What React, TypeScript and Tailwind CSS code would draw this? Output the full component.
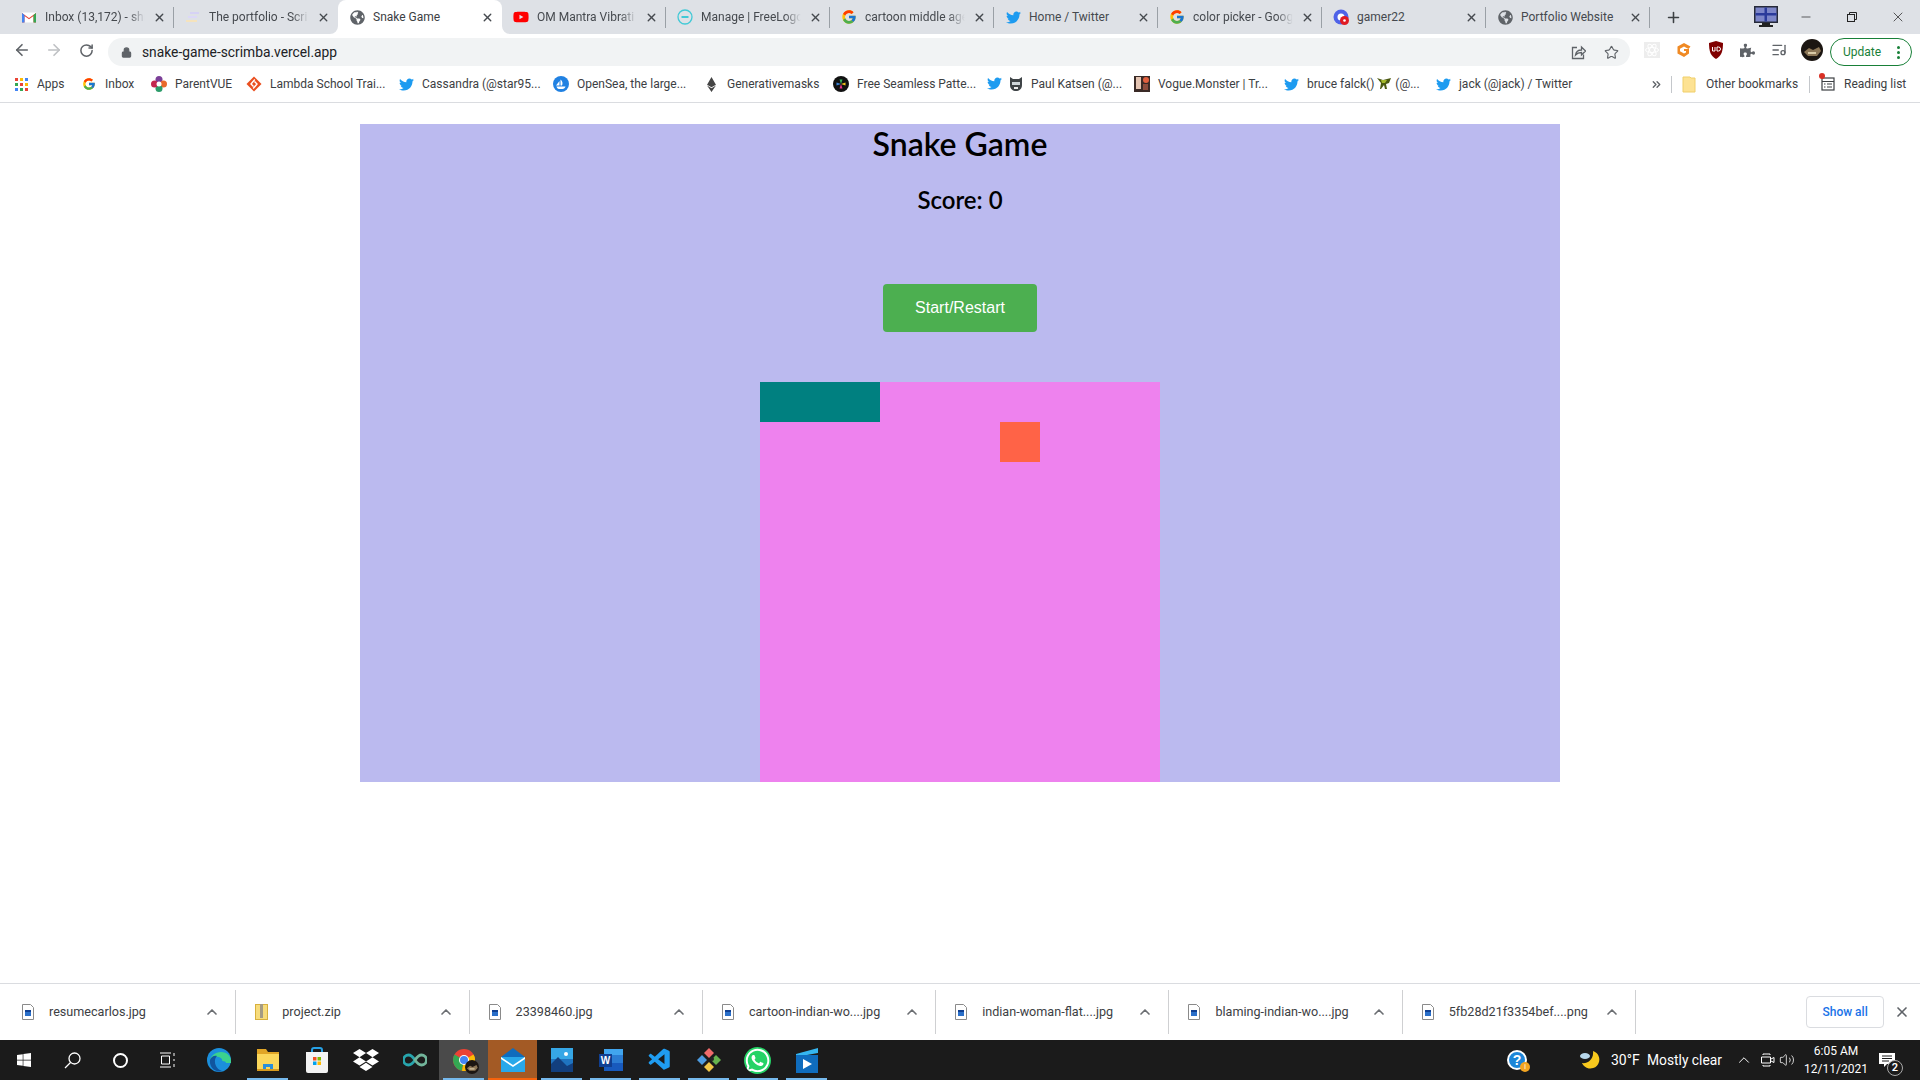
import type { ReactNode } from "react";
import { ArrowLeft, ArrowRight, RotateCw, Lock, Star, X, Plus, Minus, ChevronUp, ChevronsRight, ListMusic, Volume2 } from "lucide-react";
import { FaTwitter, FaDropbox, FaWhatsapp, FaEthereum, FaGlobeAmericas, FaPuzzlePiece, FaWindows, FaYoutube } from "react-icons/fa";
import { FcGoogle } from "react-icons/fc";
import { VscVscode } from "react-icons/vsc";

const ui = "font-['Roboto',sans-serif]";

function Gmail() {
  return (
    <svg width="16" height="16" viewBox="0 0 16 16">
      <path d="M1 3.5h14v10H1z" fill="#fff" />
      <path d="M1 13.5V4l7 5 7-5v9.500h-2.500V7L8 10.300 3.500 7v6.500z" fill="#ea4335" />
      <path d="M1 13.500V4l2.500 2v7.500z" fill="#4285f4" />
      <path d="M15 13.500V4l-2.500 2v7.500z" fill="#34a853" />
    </svg>
  );
}

function Portfolio() {
  return (
    <svg width="16" height="16" viewBox="0 0 16 16">
      <rect x="5" y="3" width="9" height="2" fill="#d6d2f5" />
      <rect x="3" y="7" width="9" height="2" fill="#dcd8f8" />
      <rect x="1" y="11" width="11" height="2" fill="#f5e3bd" />
    </svg>
  );
}

function Flo() {
  return (
    <svg width="16" height="16" viewBox="0 0 16 16">
      <circle cx="8" cy="8" r="7" fill="none" stroke="#42c9d6" strokeWidth="1.300" />
      <rect x="4.500" y="7" width="7" height="2" fill="#42c9d6" />
    </svg>
  );
}

function Gamer() {
  return (
    <svg width="16" height="16" viewBox="0 0 16 16">
      <circle cx="8" cy="8" r="7.500" fill="#4f63e8" />
      <circle cx="8" cy="8" r="3.500" fill="#fff" />
      <circle cx="11.500" cy="11.500" r="4.500" fill="#e01b24" />
      <circle cx="11.500" cy="11.500" r="1.300" fill="#fff" />
    </svg>
  );
}

function Globe() {
  return <FaGlobeAmericas size={15} color="#5f6368" />;
}

function Lambda() {
  return (
    <svg width="16" height="16" viewBox="0 0 16 16">
      <path d="M8 .5 15.500 8 8 15.500.5 8z" fill="#ea4f1f" />
      <path d="M8.800 3.500 5 8l2.500 2.500M7.200 12.500 11 8 8.500 5.500" fill="none" stroke="#fff" strokeWidth="1.400" />
    </svg>
  );
}

function ParentVue() {
  return (
    <svg width="16" height="16" viewBox="0 0 16 16">
      <circle cx="8" cy="3.500" r="3.500" fill="#7b3f98" />
      <circle cx="12.500" cy="8" r="3.500" fill="#e9692c" />
      <circle cx="8" cy="12.500" r="3.500" fill="#2c9c6a" />
      <circle cx="3.500" cy="8" r="3.500" fill="#c3274f" />
      <circle cx="8" cy="8" r="2.500" fill="#fff" />
    </svg>
  );
}

function OpenSea() {
  return (
    <svg width="16" height="16" viewBox="0 0 16 16">
      <circle cx="8" cy="8" r="8" fill="#2081e2" />
      <path d="M3 9.500h3.500V5zM7.500 3.500c2 1.500 2.500 4 1.500 6H7.500zM3.500 10.500h9c-.5 1.500-1.500 2.500-3 2.500H6c-1.300 0-2-1-2.500-2.500z" fill="#fff" />
    </svg>
  );
}

function Seamless() {
  return (
    <svg width="16" height="16" viewBox="0 0 16 16">
      <circle cx="8" cy="8" r="8" fill="#111" />
      <path d="M8 8 6.500 3.500h3z" fill="#38b35c" />
      <path d="M8 8l4.500-1.500v3z" fill="#f2c21b" />
      <path d="M8 8l1.500 4.500h-3z" fill="#e9338a" />
      <path d="M8 8 3.500 9.500v-3z" fill="#3b82d6" />
    </svg>
  );
}

function Vogue() {
  return (
    <svg width="16" height="16" viewBox="0 0 16 16">
      <rect width="16" height="16" fill="#3a2a26" />
      <rect x="2" y="1" width="5" height="12" fill="#e4c4b2" />
      <circle cx="12" cy="4" r="3" fill="#e2603f" />
      <rect x="9" y="8" width="5" height="6" fill="#8d4c3d" />
    </svg>
  );
}

function PaulIcon() {
  return (
    <svg width="14" height="16" viewBox="0 0 14 16">
      <path d="M1 1l3 2h6l3-2v8c0 4-3 6-6 6S1 13 1 9z" fill="#3f4447" />
      <rect x="3" y="6" width="8" height="3" fill="#cfd6da" />
      <rect x="5" y="11" width="4" height="2" fill="#eee" />
    </svg>
  );
}

function Bug() {
  return (
    <svg width="15" height="13" viewBox="0 0 15 13" className="mx-[3px] inline-block align-[-2px]">
      <path d="M0 1l6 2 8-2-2 5-3 1 1 5H8L7 8 4 12H3l1-6z" fill="#4c5a12" />
      <path d="M4 3h6l-2 3H5z" fill="#a5b92b" />
    </svg>
  );
}

function Folder() {
  return (
    <svg width="14" height="17" viewBox="0 0 14 17">
      <path d="M1 1h7l1 1h4v14H1z" fill="#fde293" stroke="#f0cf6b" />
    </svg>
  );
}

function ReadingList() {
  return (
    <span className="relative flex">
      <svg width="16" height="16" viewBox="0 0 16 16" fill="none" stroke="#3c4043" strokeWidth="1.200">
        <rect x="2" y="2" width="12" height="12" />
        <path d="M2 5.500h12M7 8h5M7 11h5M4 8h1.500M4 11h1.500" />
      </svg>
      <span className="absolute -top-[3px] -left-[1px] size-[6px] rounded-full bg-[#d93025]" />
    </span>
  );
}

function Apps() {
  const colors = ["#ea4335", "#fbbc05", "#4285f4", "#34a853", "#ea4335", "#fbbc05", "#4285f4", "#34a853", "#ea4335"];
  return (
    <span className="grid grid-cols-3 gap-[2px]">
      {colors.map((c, i) => (
        <span key={i} className="size-[3px]" style={{ backgroundColor: c }} />
      ))}
    </span>
  );
}

function Monitor() {
  return (
    <svg width="24" height="22" viewBox="0 0 24 22">
      <rect x="0" y="0" width="24" height="17" fill="#262a3a" />
      <rect x="1.500" y="1.500" width="21" height="14" fill="#7d86c9" />
      <rect x="1.500" y="7" width="21" height="2.500" fill="#2b3a9b" />
      <rect x="10.500" y="1.500" width="2.500" height="14" fill="#2b3a9b" />
      <rect x="8" y="17" width="8" height="2" fill="#222" />
      <rect x="5" y="19" width="14" height="2" fill="#222" />
    </svg>
  );
}

function Restore() {
  return (
    <svg width="10" height="10" viewBox="0 0 10 10" fill="none" stroke="#222" strokeWidth="1">
      <rect x=".5" y="2.500" width="7" height="7" />
      <path d="M2.500 2.500v-2h7v7h-2" />
    </svg>
  );
}

function ShareBox() {
  return (
    <svg width="15" height="15" viewBox="0 0 15 15" fill="none" stroke="#5f6368" strokeWidth="1.300">
      <path d="M6 2.500H1.500v11h11V9.500" />
      <path d="M4.500 10c.5-3.500 3-5 6-5V2l4 4-4 4V7.500c-2.500 0-4.500.8-6 2.500z" />
    </svg>
  );
}

function ReactExt() {
  return (
    <span className="flex size-[16px] items-center justify-center bg-[#ededed]">
      <svg width="14" height="14" viewBox="0 0 14 14" fill="none" stroke="#fff" strokeWidth="1">
        <ellipse cx="7" cy="7" rx="6.500" ry="2.500" />
        <ellipse cx="7" cy="7" rx="6.500" ry="2.500" transform="rotate(60 7 7)" />
        <ellipse cx="7" cy="7" rx="6.500" ry="2.500" transform="rotate(120 7 7)" />
      </svg>
    </span>
  );
}

function GExt() {
  return (
    <svg width="16" height="16" viewBox="0 0 16 16">
      <path d="M8 1 14.500 4.500 12.500 7 8 4.500 4 6.800v2.400L8 11.500l2-1.100V9H8V7h5v4.500L8 15 1.500 11.500v-7z" fill="#f08a24" />
    </svg>
  );
}

function UBlock() {
  return (
    <svg width="16" height="18" viewBox="0 0 16 18">
      <path d="M8 0 15 2c0 8-1.500 13-7 16C2.500 15 1 10 1 2z" fill="#800000" />
      <path d="M4.500 6v4h2.500V6M9 6v4h1.500a2 2 0 0 0 0-4z" fill="none" stroke="#fff" strokeWidth="1" />
    </svg>
  );
}

function Avatar({ size }: { size: number }) {
  return (
    <svg width={size} height={size} viewBox="0 0 22 22">
      <circle cx="11" cy="11" r="11" fill="#1c1612" />
      <path d="M3 13l5-4 4 2 6-3 2 4-4 5H7z" fill="#8c7656" />
      <path d="M7 13h8v2H7z" fill="#d8c9a6" />
    </svg>
  );
}

function ChromeIcon() {
  return (
    <span className="relative flex">
      <svg width="22" height="22" viewBox="0 0 22 22">
        <circle cx="11" cy="11" r="11" fill="#ea4335" />
        <path d="M11 11 1.500 5.500A11 11 0 0 0 9 21.800z" fill="#34a853" />
        <path d="M11 11l-2 10.800A11 11 0 0 0 20.500 5.500z" fill="#fbbc05" />
        <circle cx="11" cy="11" r="5" fill="#fff" />
        <circle cx="11" cy="11" r="4" fill="#4285f4" />
      </svg>
      <span className="absolute -right-[4px] -bottom-[3px] flex">
        <Avatar size={14} />
      </span>
    </span>
  );
}

function Edge() {
  return (
    <svg width="24" height="24" viewBox="0 0 24 24">
      <circle cx="12" cy="12" r="12" fill="#1b8fdc" />
      <path d="M24 13c0-5-4-9-10-9C8 4 4 8 3 12c2-3 6-4 9-3 3 1 4 3 3 6h9z" fill="#3bd28e" />
      <path d="M3 12c1-3 4-5 7-4-2 2-3 6-1 10 1 2 3 4 6 5-7 2-13-4-12-11z" fill="#10559f" />
      <ellipse cx="15" cy="15" rx="4" ry="2" fill="#1b8fdc" />
    </svg>
  );
}

function Explorer() {
  return (
    <svg width="24" height="22" viewBox="0 0 24 22">
      <path d="M1 0h9l2 3h11v4H1z" fill="#e0a526" />
      <rect x="1" y="5" width="22" height="16" fill="#fbd75b" />
      <path d="M7 21v-6h10v6h-3v-3h-4v3z" fill="#2a8fd9" />
      <rect x="1" y="20" width="22" height="2" fill="#d69a1f" />
    </svg>
  );
}

function Store() {
  return (
    <svg width="24" height="26" viewBox="0 0 24 26">
      <path d="M7 6V3a2 2 0 0 1 2-2h6a2 2 0 0 1 2 2v3" fill="none" stroke="#27a1e6" strokeWidth="2" />
      <path d="M1 5h22v19a2 2 0 0 1-2 2H3a2 2 0 0 1-2-2z" fill="#f3f3f3" />
      <rect x="8" y="10" width="3.500" height="3.500" fill="#f25022" />
      <rect x="12.500" y="10" width="3.500" height="3.500" fill="#7fba00" />
      <rect x="8" y="14.500" width="3.500" height="3.500" fill="#00a4ef" />
      <rect x="12.500" y="14.500" width="3.500" height="3.500" fill="#ffb900" />
    </svg>
  );
}

function Infinity8() {
  return (
    <svg width="24" height="14" viewBox="0 0 24 14" fill="none" strokeWidth="2.800">
      <path d="M12 7c-2-3-4-5-6.500-5a5 5 0 0 0 0 10c2.500 0 4.500-2 6.500-5z" stroke="#27a5ad" />
      <path d="M12 7c2 3 4 5 6.500 5a5 5 0 0 0 0-10C16 2 14 4 12 7z" stroke="#72b59b" />
    </svg>
  );
}

function MailIcon() {
  return (
    <svg width="24" height="24" viewBox="0 0 24 24">
      <path d="M12 0 24 9v15H0V9z" fill="#0f6cbd" />
      <rect x="0" y="9" width="24" height="15" fill="#28a8ea" />
      <path d="M0 9l12 8 12-8v2l-12 8L0 11z" fill="#fff" />
    </svg>
  );
}

function Photos() {
  return (
    <svg width="22" height="24" viewBox="0 0 22 24">
      <rect width="22" height="24" fill="#1f74c0" />
      <rect width="22" height="11" fill="#36a7e6" />
      <circle cx="15" cy="6" r="2" fill="#fff" />
      <path d="M0 16l7-7 9 9 6-3v9H0z" fill="#123f7e" />
    </svg>
  );
}

function Word() {
  return (
    <svg width="24" height="24" viewBox="0 0 24 24">
      <rect x="5" y="1" width="19" height="22" fill="#2b7cd3" />
      <rect x="5" y="1" width="19" height="6" fill="#41a5ee" />
      <rect x="5" y="15" width="19" height="8" fill="#185abd" />
      <rect x="0" y="6" width="13" height="13" fill="#103f91" />
      <text x="6.500" y="16" textAnchor="middle" fontSize="10" fontWeight="700" fill="#fff" fontFamily="Liberation Sans, sans-serif">W</text>
    </svg>
  );
}

function GitKraken() {
  return (
    <svg width="24" height="24" viewBox="0 0 24 24">
      <path d="M12 0l5 5-5 5-5-5z" fill="#ef6b6b" />
      <path d="M19 7l5 5-5 5-5-5z" fill="#66b34e" />
      <path d="M12 14l5 5-5 5-5-5z" fill="#f0c648" />
      <path d="M5 7l5 5-5 5-5-5z" fill="#4d9be0" />
      <circle cx="15" cy="11" r="2" fill="#222" />
    </svg>
  );
}

function VideoIcon() {
  return (
    <svg width="24" height="26" viewBox="0 0 24 26">
      <path d="M1 7 23 1v5L1 10z" fill="#35b6f0" />
      <rect x="1" y="8" width="22" height="18" fill="#0f6cbd" />
      <path d="M8 12l9 5-9 5z" fill="#fff" />
    </svg>
  );
}

function FileIcon({ zip }: { zip?: boolean }) {
  if (zip) {
    return (
      <svg width="13" height="16" viewBox="0 0 13 16">
        <rect x=".5" y=".5" width="12" height="15" fill="#f7dc7c" stroke="#d8b03c" />
        <rect x="5" y="0" width="3" height="14" fill="#a49b84" />
      </svg>
    );
  }
  return (
    <svg width="12" height="16" viewBox="0 0 12 16">
      <path d="M.5.5h8l3 3v12H.5z" fill="#fff" stroke="#8a8a8a" />
      <rect x="3" y="6" width="6" height="6" fill="#2a6fc9" />
      <rect x="3" y="6" width="6" height="2" fill="#0f3f91" />
    </svg>
  );
}

function HelpIcon() {
  return (
    <span className="relative flex">
      <span className="flex size-[20px] items-center justify-center rounded-full border-2 border-white bg-[#1d86d8] font-['Liberation_Sans',sans-serif] text-[14px] font-bold text-white">?</span>
      <span className="absolute -right-[3px] -bottom-[2px] flex size-[10px] items-center justify-center rounded-full bg-[#f3a522] text-[7px] text-white">i</span>
    </span>
  );
}

function Moon() {
  return (
    <svg width="20" height="18" viewBox="0 0 20 18">
      <path d="M13 0a9 9 0 1 1-11 12c5 1 12-3 11-12z" fill="#f8c91e" />
      <ellipse cx="5" cy="5" rx="5" ry="3" fill="#b6d6ea" />
    </svg>
  );
}

function MeetIcon() {
  return (
    <svg width="14" height="16" viewBox="0 0 14 16" fill="none" stroke="#fff" strokeWidth="1">
      <path d="M9 3V2H2v1M9 13v1H2v-1M.5 5v6h9V5z" />
      <path d="M10 7l3-1.500v5L10 9" />
    </svg>
  );
}

function Notice() {
  return (
    <span className="relative flex">
      <svg width="16" height="14" viewBox="0 0 16 14">
        <path d="M0 0h16v11H8l-3 3v-3H0z" fill="#fff" />
        <path d="M3 3h10M3 5.500h10M3 8h7" stroke="#1b1b1b" />
      </svg>
      <span className="absolute -right-[8px] -bottom-[9px] flex size-[16px] items-center justify-center rounded-full border border-[#aaa] bg-[#1b1b1b] text-[11px] font-semibold text-white">2</span>
    </span>
  );
}

const bird = <FaTwitter size={15} color="#1d9bf0" />;

const tabs: { icon: ReactNode; title: string; fade?: boolean; active?: boolean; line?: boolean }[] = [
  { icon: <Gmail />, title: "Inbox (13,172) - shr", fade: true, line: true },
  { icon: <Portfolio />, title: "The portfolio - Scri", fade: true },
  { icon: <Globe />, title: "Snake Game", active: true },
  { icon: <FaYoutube size={16} color="#ff0000" />, title: "OM Mantra Vibrati", fade: true, line: true },
  { icon: <Flo />, title: "Manage | FreeLogo", fade: true, line: true },
  { icon: <FcGoogle size={16} />, title: "cartoon middle age", fade: true, line: true },
  { icon: bird, title: "Home / Twitter", line: true },
  { icon: <FcGoogle size={16} />, title: "color picker - Goog", fade: true, line: true },
  { icon: <Gamer />, title: "gamer22", line: true },
  { icon: <Globe />, title: "Portfolio Website", line: true },
];

const bookmarks: { icon: ReactNode; label: ReactNode; w: string }[] = [
  { icon: <Apps />, label: "Apps", w: "w-[68px]" },
  { icon: <FcGoogle size={14} />, label: "Inbox", w: "w-[70px]" },
  { icon: <ParentVue />, label: "ParentVUE", w: "w-[95px]" },
  { icon: <Lambda />, label: "Lambda School Trai...", w: "w-[152px]" },
  { icon: bird, label: "Cassandra (@star95...", w: "w-[155px]" },
  { icon: <OpenSea />, label: "OpenSea, the large...", w: "w-[150px]" },
  { icon: <FaEthereum size={15} color="#444" />, label: "Generativemasks", w: "w-[130px]" },
  { icon: <Seamless />, label: "Free Seamless Patte...", w: "w-[154px]" },
  { icon: <span className="flex gap-[7px]">{bird}<PaulIcon /></span>, label: "Paul Katsen (@...", w: "w-[147px]" },
  { icon: <Vogue />, label: "Vogue.Monster | Tr...", w: "w-[149px]" },
  { icon: bird, label: <>bruce falck()<Bug />(@...</>, w: "w-[152px]" },
  { icon: bird, label: "jack (@jack) / Twitter", w: "w-[150px]" },
];

const downloads: { name: string; zip?: boolean }[] = [
  { name: "resumecarlos.jpg" },
  { name: "project.zip", zip: true },
  { name: "23398460.jpg" },
  { name: "cartoon-indian-wo....jpg" },
  { name: "indian-woman-flat....jpg" },
  { name: "blaming-indian-wo....jpg" },
  { name: "5fb28d21f3354bef....png" },
];

const apps: { icon: ReactNode; bar?: boolean; bg?: string; orange?: boolean }[] = [
  { icon: <Edge /> },
  { icon: <Explorer />, bar: true },
  { icon: <Store /> },
  { icon: <FaDropbox size={26} color="#fff" /> },
  { icon: <Infinity8 /> },
  { icon: <ChromeIcon />, bar: true, bg: "bg-[#4a4a4a]" },
  { icon: <MailIcon />, orange: true, bg: "bg-[#a35a25]" },
  { icon: <Photos />, bar: true },
  { icon: <Word />, bar: true },
  { icon: <VscVscode size={26} color="#1f9cf0" />, bar: true },
  { icon: <GitKraken />, bar: true },
  { icon: <FaWhatsapp size={27} color="#fff" className="rounded-full bg-[#25d366]" />, bar: true },
  { icon: <VideoIcon />, bar: true },
];

function Tab({ icon, title, fade, active, line }: (typeof tabs)[number]) {
  return (
    <div className={`relative flex h-[34px] w-[164px] shrink-0 items-center pr-[8px] pl-[11px] ${active ? "rounded-t-lg bg-white" : ""}`}>
      <span className="flex w-[16px] shrink-0 items-center justify-center">{icon}</span>
      <span
        className={`ml-[8px] flex-1 text-[12px] whitespace-nowrap ${active ? "text-[#3c4043]" : "text-[#45494e]"} ${fade ? "[mask-image:linear-gradient(to_right,black_80%,transparent_96%)]" : ""}`}
      >
        {title}
      </span>
      <X size={13} strokeWidth={2.500} className="ml-[4px] shrink-0 text-[#45494e]" />
      {line && <span className="absolute top-[7px] right-0 h-[21px] w-px bg-[#9aa0a6]" />}
      {active && (
        <>
          <svg width="8" height="8" viewBox="0 0 8 8" className="absolute bottom-0 -left-[8px]">
            <path d="M8 0v8H0a8 8 0 0 0 8-8z" fill="#fff" />
          </svg>
          <svg width="8" height="8" viewBox="0 0 8 8" className="absolute -right-[8px] bottom-0">
            <path d="M0 0v8h8a8 8 0 0 1-8-8z" fill="#fff" />
          </svg>
        </>
      )}
    </div>
  );
}

function Bookmark({ icon, label, w }: (typeof bookmarks)[number]) {
  return (
    <div className={`flex shrink-0 items-center gap-[8px] ${w}`}>
      <span className="flex min-w-[16px] shrink-0 items-center justify-center">{icon}</span>
      <span className="text-[12px] whitespace-nowrap text-[#3c4043]">{label}</span>
    </div>
  );
}

function Download({ name, zip }: (typeof downloads)[number]) {
  return (
    <div className="flex h-[44px] w-[233.3px] shrink-0 items-center border-r border-[#cfd0d2] pr-[15px] pl-[17px]">
      <span className="flex w-[16px] justify-center">
        <FileIcon zip={zip} />
      </span>
      <span className="ml-[13px] flex-1 text-[12.600px] whitespace-nowrap text-[#3c4043]">{name}</span>
      <ChevronUp size={16} strokeWidth={2.500} className="text-[#6b6e72]" />
    </div>
  );
}

export default function App() {
  return (
    <div className={`flex h-screen w-[1920px] flex-col overflow-hidden bg-white ${ui}`}>
      {/* tab strip */}
      <div className="flex h-[34px] shrink-0 items-center bg-[#dee1e6] pl-[10px]">
        {tabs.map((t) => (
          <Tab key={t.title} {...t} />
        ))}
        <Plus size={17} strokeWidth={2.200} className="ml-[15px] shrink-0 text-[#3c4043]" />
        <span className="ml-[72px] flex shrink-0">
          <Monitor />
        </span>
        <Minus size={14} strokeWidth={1.200} className="ml-[21px] shrink-0 text-[#222]" />
        <span className="ml-[34px] flex shrink-0">
          <Restore />
        </span>
        <X size={16} strokeWidth={1.100} className="ml-[33px] shrink-0 text-[#222]" />
      </div>

      {/* toolbar */}
      <div className="flex h-[32px] shrink-0 items-end">
        <div className="flex w-[108px] items-center self-center pl-[13px] text-[#5f6368]">
          <ArrowLeft size={18} strokeWidth={2.200} />
          <ArrowRight size={18} strokeWidth={2.200} className="ml-[14px] text-[#bfc1c4]" />
          <RotateCw size={15} strokeWidth={2.400} className="ml-[16px]" />
        </div>
        <div className="flex h-[28px] w-[1522px] items-center rounded-full bg-[#f1f3f4] pr-[10px] pl-[13px] text-[#5f6368]">
          <Lock size={11} fill="#5f6368" strokeWidth={2.500} />
          <span className="ml-[10px] flex-1 text-[13.800px] text-[#202124]">snake-game-scrimba.vercel.app</span>
          <ShareBox />
          <Star size={15} strokeWidth={1.800} className="mr-[1px] ml-[18px]" />
        </div>
        <div className="ml-[14px] flex items-center gap-[16px] self-center text-[#5f6368]">
          <ReactExt />
          <GExt />
          <UBlock />
          <FaPuzzlePiece size={15} />
          <ListMusic size={16} />
        </div>
        <span className="ml-[14px] flex self-center">
          <Avatar size={22} />
        </span>
        <div className="ml-[7px] flex h-[28px] w-[82px] items-center justify-between rounded-full border border-[#188038] pr-[11px] pl-[12px] text-[12px] text-[#188038]">
          Update
          <span className="flex flex-col gap-[2px]">
            <span className="size-[3px] rounded-full bg-[#188038]" />
            <span className="size-[3px] rounded-full bg-[#188038]" />
            <span className="size-[3px] rounded-full bg-[#188038]" />
          </span>
        </div>
      </div>

      {/* bookmarks */}
      <div className="flex h-[37px] shrink-0 items-center border-b border-[#dadce0] pl-[13px]">
        {bookmarks.map((b, i) => (
          <Bookmark key={i} {...b} />
        ))}
        <ChevronsRight size={13} strokeWidth={2.500} className="ml-[65px] shrink-0 text-[#5f6368]" />
        <span className="ml-[8px] h-[17px] w-px shrink-0 bg-[#c4c7cb]" />
        <span className="ml-[10px] flex shrink-0">
          <Folder />
        </span>
        <span className="ml-[10px] w-[103px] shrink-0 text-[12px] text-[#3c4043]">Other bookmarks</span>
        <span className="h-[17px] w-px shrink-0 bg-[#c4c7cb]" />
        <span className="ml-[10px] flex shrink-0">
          <ReadingList />
        </span>
        <span className="ml-[8px] text-[12px] whitespace-nowrap text-[#3c4043]">Reading list</span>
      </div>

      {/* page */}
      <main className="min-h-0 flex-1 pt-[21px]">
        <div className="mx-auto flex h-[658px] w-[1200px] flex-col items-center bg-[#bbbaef] font-['Lato',sans-serif] text-black">
          <h1 className="text-[32px] leading-[40px] font-semibold">Snake Game</h1>
          <p className="mt-[21px] text-[24px] leading-[30px] font-semibold">Score: 0</p>
          <button className="mt-[69px] h-[48px] w-[154px] rounded-[4px] bg-[#4caf50] font-['Liberation_Sans',sans-serif] text-[16px] text-white">
            Start/Restart
          </button>
          <div className="mt-[50px] grid size-[400px] grid-cols-10 grid-rows-10 bg-[#ee82ee]">
            <div className="col-span-3 col-start-1 row-start-1 bg-[#008080]" />
            <div className="col-start-7 row-start-2 bg-[#ff6347]" />
          </div>
        </div>
      </main>

      {/* download shelf */}
      <div className="flex h-[57px] shrink-0 items-center border-t border-[#dadce0] pl-[3px]">
        {downloads.map((d) => (
          <Download key={d.name} {...d} />
        ))}
        <button className="ml-[170px] h-[32px] w-[78px] shrink-0 rounded-[4px] border border-[#dadce0] text-[12px] font-medium text-[#1a73e8]">Show all</button>
        <X size={16} strokeWidth={2.500} className="ml-[10px] shrink-0 text-[#5f6368]" />
      </div>

      {/* taskbar */}
      <div className="flex h-[40px] shrink-0 items-center bg-[#1b1b1b] text-white">
        <span className="flex w-[48px] justify-center">
          <FaWindows size={16} />
        </span>
        <span className="flex w-[48px] justify-center">
          <svg width="17" height="17" viewBox="0 0 17 17" fill="none" stroke="#fff" strokeWidth="1.300">
            <circle cx="10.500" cy="6.500" r="5.500" />
            <path d="M6.500 10.500 1 16" />
          </svg>
        </span>
        <span className="flex w-[48px] justify-center">
          <span className="size-[15px] rounded-full border-[2.500px] border-white" />
        </span>
        <span className="flex w-[48px] justify-center">
          <svg width="16" height="16" viewBox="0 0 16 16" fill="none" stroke="#fff" strokeWidth="1">
            <path d="M0 1h11M0 15h11M1.500 4h8v8h-8zM14 1v3M14 7v2M14 12v3" />
          </svg>
        </span>
        <div className="ml-[2px] flex h-full">
          {apps.map((a, i) => (
            <div key={i} className={`relative flex h-full w-[49px] items-center justify-center ${a.bg ?? ""}`}>
              {a.icon}
              {a.bar && <span className="absolute inset-x-[4px] bottom-0 h-[2px] bg-[#76b9ed]" />}
              {a.orange && <span className="absolute inset-x-0 bottom-0 h-[2px] bg-[#f7630c]" />}
            </div>
          ))}
        </div>
        <div className="flex-1" />
        <HelpIcon />
        <span className="ml-[53px] flex">
          <Moon />
        </span>
        <span className="ml-[11px] w-[27px] text-[14px] whitespace-nowrap">30°F</span>
        <span className="ml-[9px] w-[74px] text-[13.800px] whitespace-nowrap">Mostly clear</span>
        <ChevronUp size={18} strokeWidth={1.300} className="ml-[14px]" />
        <span className="ml-[8px] flex">
          <MeetIcon />
        </span>
        <Volume2 size={16} strokeWidth={1.200} className="ml-[4px]" />
        <div className="ml-[12px] flex w-[58px] flex-col items-center text-[12px] leading-[18px] whitespace-nowrap">
          <span>6:05 AM</span>
          <span>12/11/2021</span>
        </div>
        <span className="mr-[25px] ml-[14px] flex">
          <Notice />
        </span>
      </div>
    </div>
  );
}
